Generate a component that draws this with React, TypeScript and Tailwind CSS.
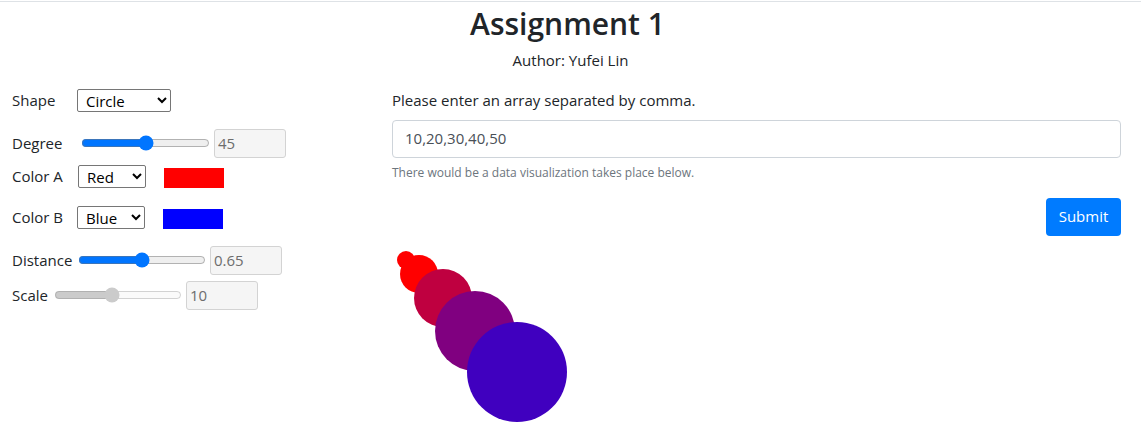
import React from "react";

const font = { fontFamily: '"Open Sans", "Noto Sans", sans-serif' };

function Circles() {
  const cs = [
    { cx: 406, cy: 259, r: 9, c: "#ff0000" },
    { cx: 419, cy: 273, r: 19, c: "#ff0000" },
    { cx: 443, cy: 297, r: 29, c: "#bf0040" },
    { cx: 475, cy: 330, r: 40, c: "#800080" },
    { cx: 517, cy: 371, r: 50, c: "#4000bf" },
  ];
  return (
    <svg width="729" height="190" viewBox="392 240 729 190" className="block mt-[5px]">
      {cs.map((c, i) => (
        <circle key={i} cx={c.cx} cy={c.cy} r={c.r} fill={c.c} />
      ))}
    </svg>
  );
}

export default function App() {
  return (
    <div className="w-[1141px] h-[448px] bg-white text-[#212529] overflow-hidden" style={font}>
      <div className="mt-px border-t border-[#dee2e6]" />
      <div className="text-center">
        <h1 className="text-[30px] font-semibold leading-[36px] pt-[4px] pr-[6px]">Assignment 1</h1>
        <div className="text-[15px] mt-[7px]">Author: Yufei Lin</div>
      </div>
      <div className="flex">
        <div className="w-[392px] pl-3 text-[15px]">
          <div className="flex items-center h-[23px] mt-[17px]">
            <span className="w-[65px]">Shape</span>
            <select className="w-[94px] h-[23px] border border-[#767676] rounded-[2px] px-1 text-[15px] text-black">
              <option>Circle</option>
            </select>
          </div>
          <div className="flex items-center h-[29px] mt-[17px]">
            <span className="w-[69px]">Degree</span>
            <input type="range" className="m-0 w-[129px] accent-[#0075ff]" defaultValue={50} />
            <input disabled value="45" readOnly className="ml-[4px] w-[72px] h-[29px] border border-[#d3d3d3] rounded-[3px] bg-[#f5f5f5] px-[3px] text-[#6d6d6d] text-[15px]" />
          </div>
          <div className="flex items-center h-[23px] mt-[7px]">
            <span className="w-[66px]">Color A</span>
            <select className="w-[68px] h-[23px] border border-[#767676] rounded-[2px] px-1 text-[15px] text-black">
              <option>Red</option>
            </select>
            <div className="ml-[18px] mt-[4px] w-[60px] h-[20px] bg-[#ff0000]" />
          </div>
          <div className="flex items-center h-[23px] mt-[18px]">
            <span className="w-[65px]">Color B</span>
            <select className="w-[68px] h-[23px] border border-[#767676] rounded-[2px] px-1 text-[15px] text-black">
              <option>Blue</option>
            </select>
            <div className="ml-[18px] mt-[4px] w-[60px] h-[20px] bg-[#0000ff]" />
          </div>
          <div className="flex items-center h-[29px] mt-[17px]">
            <span className="w-[66px]">Distance</span>
            <input type="range" className="m-0 w-[128px] accent-[#0075ff]" defaultValue={50} />
            <input disabled value="0.65" readOnly className="ml-[4px] w-[72px] h-[29px] border border-[#d3d3d3] rounded-[3px] bg-[#f5f5f5] px-[3px] text-[#6d6d6d] text-[15px]" />
          </div>
          <div className="flex items-center h-[29px] mt-[6px]">
            <span className="w-[42px]">Scale</span>
            <input type="range" disabled className="m-0 w-[128px]" defaultValue={45} />
            <input disabled value="10" readOnly className="ml-[4px] w-[72px] h-[29px] border border-[#d3d3d3] rounded-[3px] bg-[#f5f5f5] px-[3px] text-[#6d6d6d] text-[15px]" />
          </div>
        </div>
        <div className="w-[729px]">
          <div className="text-[15px] mt-[16px] leading-[24px]">Please enter an array separated by comma.</div>
          <div className="mt-[8px] h-[38px] border border-[#ced4da] rounded-[4px] flex items-center px-3 text-[15px] text-[#495057]">
            10,20,30,40,50
          </div>
          <div className="mt-[6px] text-[12px] text-[#6c757d]">There would be a data visualization takes place below.</div>
          <div className="flex justify-end mt-[16px]">
            <button className="w-[75px] h-[38px] bg-[#007bff] text-white rounded-[4px] text-[15px]">Submit</button>
          </div>
          <Circles />
        </div>
      </div>
    </div>
  );
}
